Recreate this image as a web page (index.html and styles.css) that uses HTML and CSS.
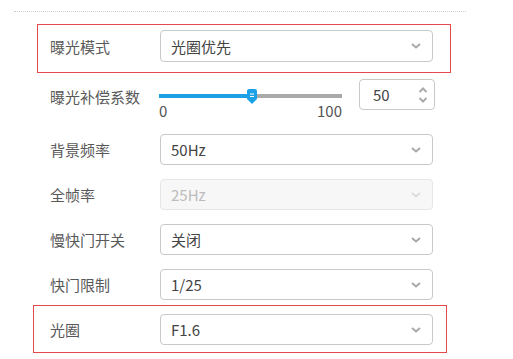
FILE: index.html
```html
<!doctype html>
<html lang="zh-CN">
<head>
    <meta charset="UTF-8">
    <title>曝光设置</title>

    <link rel="stylesheet" href="styles.css">
</head>
<body>

<div class="page">

    <div class="divider"></div>

    <div class="form">

        <div class="row row--mark-top">
            <label class="row__label">曝光模式</label>
            <div class="fake-select">
                <span class="fake-select__value">光圈优先</span>
                <svg class="fake-select__arrow" width="10" height="6" viewBox="0 0 10 6"><path d="M1 1l4 3.5L9 1" fill="none" stroke="#a8a8a8" stroke-width="2"/></svg>
            </div>
        </div>

        <div class="row row--slider">
            <label class="row__label">曝光补偿系数</label>
            <div class="slider">
                <div class="slider__track">
                    <div class="slider__fill" style="width: 50%"></div>
                    <svg class="slider__thumb" style="left: 50%" width="10" height="15" viewBox="0 0 10 15">
                        <path d="M2 0h6a2 2 0 0 1 2 2v8l-5 5-5-5V2a2 2 0 0 1 2-2z" fill="#1ba1e6"/>
                        <path d="M3 5h4M3 7.5h4" stroke="#fff" stroke-width="1"/>
                    </svg>
                </div>
                <div class="slider__scale">
                    <span>0</span>
                    <span>100</span>
                </div>
            </div>
            <div class="spin">
                <span class="spin__value">50</span>
                <svg class="spin__arrows" width="10" height="18" viewBox="0 0 10 18"><path d="M1.5 6L5 2.5 8.5 6M1.5 12L5 15.5 8.5 12" fill="none" stroke="#aaa" stroke-width="2"/></svg>
            </div>
        </div>

        <div class="row">
            <label class="row__label">背景频率</label>
            <div class="fake-select">
                <span class="fake-select__value">50Hz</span>
                <svg class="fake-select__arrow" width="10" height="6" viewBox="0 0 10 6"><path d="M1 1l4 3.5L9 1" fill="none" stroke="#a8a8a8" stroke-width="2"/></svg>
            </div>
        </div>

        <div class="row">
            <label class="row__label">全帧率</label>
            <div class="fake-select fake-select--disabled">
                <span class="fake-select__value">25Hz</span>
                <svg class="fake-select__arrow" width="10" height="6" viewBox="0 0 10 6"><path d="M1 1l4 3.5L9 1" fill="none" stroke="#dcdcdc" stroke-width="2"/></svg>
            </div>
        </div>

        <div class="row">
            <label class="row__label">慢快门开关</label>
            <div class="fake-select">
                <span class="fake-select__value">关闭</span>
                <svg class="fake-select__arrow" width="10" height="6" viewBox="0 0 10 6"><path d="M1 1l4 3.5L9 1" fill="none" stroke="#a8a8a8" stroke-width="2"/></svg>
            </div>
        </div>

        <div class="row">
            <label class="row__label">快门限制</label>
            <div class="fake-select">
                <span class="fake-select__value">1/25</span>
                <svg class="fake-select__arrow" width="10" height="6" viewBox="0 0 10 6"><path d="M1 1l4 3.5L9 1" fill="none" stroke="#a8a8a8" stroke-width="2"/></svg>
            </div>
        </div>

        <div class="row row--mark-bottom">
            <label class="row__label">光圈</label>
            <div class="fake-select">
                <span class="fake-select__value">F1.6</span>
                <svg class="fake-select__arrow" width="10" height="6" viewBox="0 0 10 6"><path d="M1 1l4 3.5L9 1" fill="none" stroke="#a8a8a8" stroke-width="2"/></svg>
            </div>
        </div>

    </div>

</div>

</body>
</html>
```

FILE: styles.css
```css
* {
    margin: 0;
    padding: 0;
    box-sizing: border-box;
}

body {
    background: #fff;
    font-family: "Noto Sans CJK SC", "Open Sans", sans-serif;
    font-size: 15px;
    color: #555;
}

.page {
    padding: 11px 0 0 14px;
}

.divider {
    width: 452px;
    border-top: 1px dotted #d0d0d0;
}

.form {
    display: flex;
    flex-direction: column;
    padding: 18px 0 0 36px;
}

.row {
    position: relative;
    display: flex;
    align-items: center;
    width: 385px;
    height: 31px;
    margin-bottom: 14px;
}

.row__label {
    width: 110px;
    flex-shrink: 0;
    line-height: 31px;
    color: #595959;
}

/* red marks over the two rows */
.row--mark-top::after,
.row--mark-bottom::after {
    content: "";
    position: absolute;
    border: 1px solid #e5484d;
    pointer-events: none;
}

.row--mark-top {
    height: 32px;
    margin-bottom: 17px;
}

.row--mark-top::after {
    top: -6px;
    bottom: -11px;
    left: -13px;
    right: -16px;
}

.row--mark-bottom::after {
    top: -9px;
    bottom: -8px;
    left: -17px;
    right: -12px;
}

.fake-select {
    display: flex;
    align-items: center;
    justify-content: space-between;
    width: 273px;
    height: 100%;
    padding: 0 11px 0 10px;
    border: 1px solid #c9c9c9;
    border-radius: 4px;
    background: #fff;
    color: #444;
}

.fake-select--disabled {
    background: #f7f7f7;
    border-color: #e6e6e6;
    color: #bcbcbc;
}

.fake-select__arrow {
    display: block;
}

.row--slider {
    margin-bottom: 24px;
}

.row--slider .row__label {
    margin-top: 4px;
}

.slider {
    width: 183px;
    margin-right: 17px;
    padding-top: 15px;
    align-self: flex-start;
    margin-left: -1px;
}

.slider__track {
    position: relative;
    height: 4px;
    background: #a9a9a9;
}

.slider__fill {
    height: 100%;
    background: #1ba1e6;
}

.slider__thumb {
    position: absolute;
    top: -5px;
    margin-left: -4px;
}

.slider__scale {
    display: flex;
    justify-content: space-between;
    margin-top: 5px;
    line-height: 16px;
    color: #555;
}

.spin {
    display: flex;
    align-items: center;
    justify-content: space-between;
    width: 76px;
    height: 31px;
    padding: 0 6px 0 13px;
    border: 1px solid #c9c9c9;
    border-radius: 4px;
    color: #444;
}

.spin__arrows {
    display: block;
}
```
